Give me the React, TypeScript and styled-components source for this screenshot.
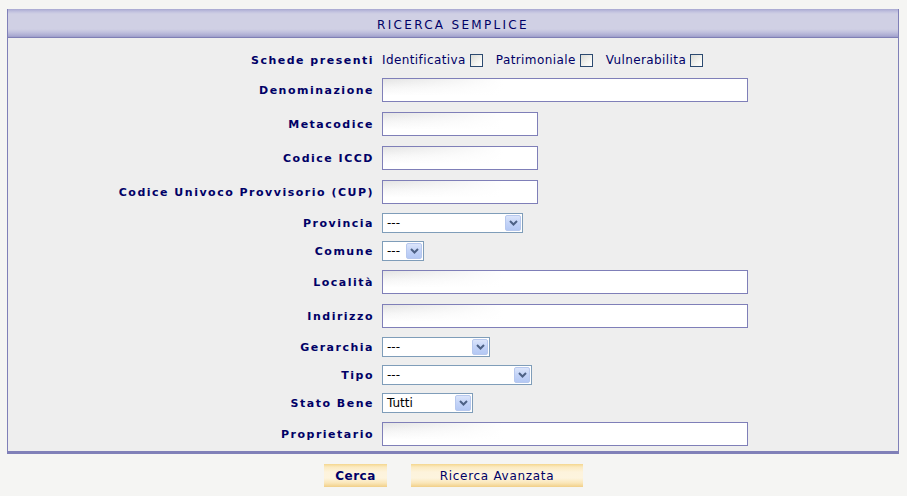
import React, { FC } from 'react'
import styled, { createGlobalStyle } from 'styled-components'

const GlobalStyle = createGlobalStyle`
  html, body {
    margin: 0;
    padding: 0;
    background: #f5f5f3;
    font-family: Verdana, "DejaVu Sans", sans-serif;
  }
`

const Panel = styled.div`
  margin: 9px 8px 0 7px;
  background: #eeeeee;
  border-left: 1px solid #8080b8;
  border-right: 1px solid #8080b8;
  border-bottom: 3px solid #8080b8;
`

const PanelHeader = styled.div`
  height: 28px;
  display: flex;
  align-items: center;
  justify-content: center;
  background: linear-gradient(
    to bottom,
    #a9a9d2 0,
    #c4c4e0 3px,
    #d0d0e4 5px,
    #d0d0e4 20px,
    #c2c2de 23px,
    #a8a8d0 27px,
    #9a9ac8 28px
  );
  border-bottom: 1px solid #7f7fb5;
`

const PanelTitle = styled.h3`
  margin: 3px 0 0;
  font-size: 12px;
  font-weight: 400;
  letter-spacing: 2.3px;
  color: #000066;
`

const Form = styled.div`
  padding-top: 9px;
`

const Row = styled.div<{ $h: number }>`
  display: grid;
  grid-template-columns: 366px 1fr;
  column-gap: 8px;
  align-items: center;
  height: ${(p) => p.$h}px;
`

const Label = styled.label`
  text-align: right;
  font-size: 11px;
  font-weight: 700;
  letter-spacing: 1.5px;
  color: #000066;
  white-space: nowrap;
`

const Field = styled.div`
  display: flex;
  align-items: center;
`

const TextInput = styled.input<{ $w: number }>`
  box-sizing: border-box;
  width: ${(p) => p.$w}px;
  height: 24px;
  margin: 0;
  border: 1px solid #7f7fb8;
  background:
    linear-gradient(to right, rgba(255, 255, 255, 0) 0, #ffffff 120px),
    linear-gradient(to bottom, #e4e4e4 0, #f6f6f6 40%, #ffffff 75%);
  outline: none;
`

const CheckGroup = styled.div`
  display: flex;
  align-items: center;
  gap: 13px;
`

const CheckItem = styled.label`
  display: flex;
  align-items: center;
  gap: 4px;
  font-size: 12px;
  letter-spacing: 0.4px;
  color: #000066;
`

const CheckBox = styled.span`
  display: inline-block;
  box-sizing: border-box;
  width: 13px;
  height: 13px;
  border: 1px solid #2c4a70;
  background: linear-gradient(135deg, #dcdcd6 0, #f4f4f0 60%, #ffffff 100%);
`

const SelectBox = styled.div<{ $w: number }>`
  box-sizing: border-box;
  width: ${(p) => p.$w}px;
  height: 20px;
  display: flex;
  align-items: center;
  justify-content: space-between;
  border: 1px solid #7f9db9;
  background: #ffffff;
  padding: 1px;
`

const SelectValue = styled.span`
  padding-left: 3px;
  font-family: Tahoma, "DejaVu Sans", sans-serif;
  font-size: 12px;
  color: #000;
`

const SelectArrow = styled.span`
  box-sizing: border-box;
  width: 16px;
  height: 16px;
  display: flex;
  align-items: center;
  justify-content: center;
  border: 1px solid #b7c8ee;
  border-radius: 2px;
  background: linear-gradient(to bottom, #dbe5fb 0, #c3d3f7 50%, #b4c8f4 100%);
`

const Buttons = styled.div`
  display: flex;
  justify-content: center;
  gap: 24px;
  margin-top: 10px;
`

const Button = styled.button<{ $w: number; $bold?: boolean }>`
  width: ${(p) => p.$w}px;
  height: 23px;
  border: none;
  padding: 0;
  font-family: Verdana, "DejaVu Sans", sans-serif;
  font-size: 12px;
  font-weight: ${(p) => (p.$bold ? 700 : 400)};
  letter-spacing: ${(p) => (p.$bold ? '0.5px' : '0.7px')};
  color: #000066;
  background: linear-gradient(
    to bottom,
    #f4d68e 0,
    #fbeac0 3px,
    #fdf3dc 8px,
    #fdf4de 14px,
    #fae6b8 19px,
    #f1cf88 23px
  );
`

const Chevron: FC = () => (
  <svg width="9" height="6" viewBox="0 0 9 6">
    <polyline points="1,1 4.5,4.5 8,1" fill="none" stroke="#4d6185" strokeWidth="2" />
  </svg>
)

type SelectProps = { width: number; value: string }

const Select: FC<SelectProps> = ({ width, value }) => (
  <SelectBox $w={width}>
    <SelectValue>{value}</SelectValue>
    <SelectArrow>
      <Chevron />
    </SelectArrow>
  </SelectBox>
)

const TEXT_ROW = 34
const SELECT_ROW = 28

export const App: FC = () => {
  return (
    <>
      <GlobalStyle />
      <Panel>
        <PanelHeader>
          <PanelTitle>RICERCA SEMPLICE</PanelTitle>
        </PanelHeader>
        <Form>
          <Row $h={26}>
            <Label>Schede presenti</Label>
            <Field>
              <CheckGroup>
                <CheckItem>Identificativa <CheckBox /></CheckItem>
                <CheckItem>Patrimoniale <CheckBox /></CheckItem>
                <CheckItem>Vulnerabilita <CheckBox /></CheckItem>
              </CheckGroup>
            </Field>
          </Row>
          <Row $h={TEXT_ROW}>
            <Label>Denominazione</Label>
            <Field><TextInput $w={366} /></Field>
          </Row>
          <Row $h={TEXT_ROW}>
            <Label>Metacodice</Label>
            <Field><TextInput $w={156} /></Field>
          </Row>
          <Row $h={TEXT_ROW}>
            <Label>Codice ICCD</Label>
            <Field><TextInput $w={156} /></Field>
          </Row>
          <Row $h={TEXT_ROW}>
            <Label>Codice Univoco Provvisorio (CUP)</Label>
            <Field><TextInput $w={156} /></Field>
          </Row>
          <Row $h={SELECT_ROW}>
            <Label>Provincia</Label>
            <Field><Select width={141} value="---" /></Field>
          </Row>
          <Row $h={SELECT_ROW}>
            <Label>Comune</Label>
            <Field><Select width={42} value="---" /></Field>
          </Row>
          <Row $h={TEXT_ROW}>
            <Label>Località</Label>
            <Field><TextInput $w={366} /></Field>
          </Row>
          <Row $h={TEXT_ROW}>
            <Label>Indirizzo</Label>
            <Field><TextInput $w={366} /></Field>
          </Row>
          <Row $h={SELECT_ROW}>
            <Label>Gerarchia</Label>
            <Field><Select width={108} value="---" /></Field>
          </Row>
          <Row $h={SELECT_ROW}>
            <Label>Tipo</Label>
            <Field><Select width={150} value="---" /></Field>
          </Row>
          <Row $h={SELECT_ROW}>
            <Label>Stato Bene</Label>
            <Field><Select width={91} value="Tutti" /></Field>
          </Row>
          <Row $h={TEXT_ROW}>
            <Label>Proprietario</Label>
            <Field><TextInput $w={366} /></Field>
          </Row>
        </Form>
      </Panel>
      <Buttons>
        <Button $w={63} $bold>Cerca</Button>
        <Button $w={172}>Ricerca Avanzata</Button>
      </Buttons>
    </>
  )
}

export default App
